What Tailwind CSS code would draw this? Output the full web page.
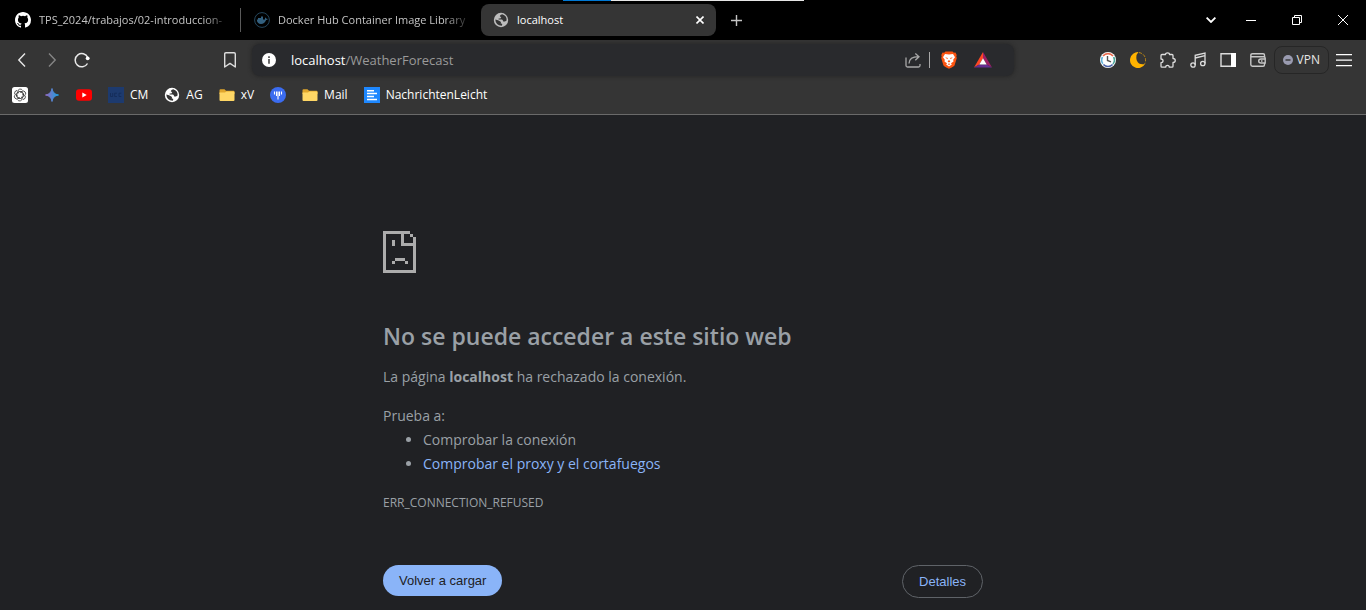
<!DOCTYPE html>
<html lang="es">
<head>
<meta charset="utf-8">
<meta name="viewport" content="width=device-width, initial-scale=1">
<title>localhost</title>
<script src="https://cdn.jsdelivr.net/npm/@tailwindcss/browser@4"></script>
</head>
<body class="min-h-screen overflow-hidden bg-[#202124] font-['Open_Sans',sans-serif] text-[#9aa0a6]">
<svg class="hidden" aria-hidden="true">
  <symbol id="globe" viewBox="0 0 16 16">
    <circle cx="8" cy="8" r="7.200" fill="currentColor"/>
    <path d="M9.200 2.300Q7 3 6.800 4.300L8.200 5.200 7.400 6.500H5.600V7.600H9Q10 8.200 10.200 9.400H12L13.600 8.600Q14 3.800 9.200 2.300ZM2.300 7.500 5 8.300 7.400 9.400Q8.600 10.200 7.600 11.300L9.300 12 8.800 13.700Q2.600 13.400 2.300 7.500Z" fill="#353535"/>
  </symbol>
  <symbol id="folder" viewBox="0 0 16 16">
    <path d="M.5 3.200Q.5 2.200 1.500 2.200H5.500L7 3.800H14.500Q15.500 3.800 15.500 4.800V7H.5Z" fill="#e0a62c"/>
    <path d="M.5 5.500H6L7.400 4.400H14.500Q15.500 4.400 15.500 5.400V13Q15.500 14 14.500 14H1.500Q.5 14 .5 13Z" fill="#ffd765"/>
  </symbol>
</svg>

<header class="relative">
  <div class="absolute left-[563px] top-0 flex h-px w-[241px] bg-[#e6e6e6]"><span class="h-px w-12 bg-[#0078d4]"></span></div>

  <nav class="flex h-10 items-center bg-black text-[11px]" aria-label="Pestañas">
    <a href="#" class="flex h-6 w-[241px] shrink-0 items-center gap-2 border-r border-[#5a5a5a] pl-[15px] pr-2 text-[#c4c4c4]">
      <svg class="size-4 shrink-0" viewBox="0 0 16 16" fill="#fff"><path d="M8 0C3.580 0 0 3.580 0 8c0 3.540 2.290 6.530 5.470 7.590.4.070.55-.17.55-.38v-1.490c-2.010.37-2.530-.49-2.690-.94-.09-.23-.48-.94-.82-1.130-.28-.15-.68-.52-.01-.53.63-.01 1.080.58 1.230.82.72 1.210 1.870.87 2.330.66.07-.52.28-.87.51-1.070-1.780-.2-3.640-.89-3.640-3.950 0-.87.31-1.590.82-2.150-.08-.2-.36-1.020.08-2.120 0 0 .67-.21 2.200.82a7.700 7.700 0 0 1 4 0c1.530-1.040 2.200-.82 2.200-.82.44 1.100.16 1.920.08 2.120.51.56.82 1.270.82 2.150 0 3.070-1.870 3.750-3.650 3.950.29.25.54.73.54 1.480v2.200c0 .21.15.46.55.38A8 8 0 0 0 16 8c0-4.420-3.580-8-8-8Z"/></svg>
      <span class="min-w-0 flex-1 overflow-hidden whitespace-nowrap mask-r-from-85%">TPS_2024/trabajos/02-introduccion-</span>
    </a>
    <a href="#" class="flex h-6 w-60 shrink-0 items-center gap-2 pl-[13px] pr-2 text-[#c4c4c4]">
      <svg class="size-4 shrink-0" viewBox="0 0 16 16"><circle cx="8" cy="8" r="7.400" fill="none" stroke="#24465c"/><path d="M2.800 7.600H11q-.3-1.300.3-2.200 1 .5 1 1.400 1-.2 1.600.2-.6 1-1.800 1.100Q10.500 12 7 12 3 12 2.800 7.600ZM4 6h3V4.600h2V7.600H4Z" fill="#33607f"/></svg>
      <span class="min-w-0 flex-1 overflow-hidden whitespace-nowrap mask-r-from-85%">Docker Hub Container Image Library</span>
    </a>
    <div class="flex h-8 w-[235px] shrink-0 items-center rounded-lg bg-[#353535] pl-3 pr-2.5 text-white">
      <svg class="size-4 text-[#bdbdbd]"><use href="#globe"/></svg>
      <span class="ml-2 flex-1">localhost</span>
      <button aria-label="Cerrar pestaña" class="p-0.5"><svg class="size-2" viewBox="0 0 8 8" fill="none" stroke="#fff" stroke-width="1.600"><path d="M.5.5l7 7M7.500.5l-7 7"/></svg></button>
    </div>
    <button aria-label="Nueva pestaña" class="ml-[15px]"><svg class="size-[11px]" viewBox="0 0 11 11" stroke="#c4c4c4" stroke-width="1.400"><path d="M5.500 0v11M0 5.500h11"/></svg></button>
    <div class="ml-auto flex items-center pr-[18px]">
      <button aria-label="Buscar pestañas" class="mr-[30px]"><svg class="h-1.5 w-2.5" viewBox="0 0 10 6" fill="none" stroke="#fff" stroke-width="1.800"><path d="M.6.6 5 5 9.400.6"/></svg></button>
      <button aria-label="Minimizar" class="mr-9"><svg class="size-2.5" viewBox="0 0 10 10" fill="#fff"><path d="M0 5h10v1H0z"/></svg></button>
      <button aria-label="Restaurar" class="mr-9"><svg class="size-2.5" viewBox="0 0 10 10" fill="none" stroke="#fff"><path d="M.5 2.500h7v7h-7ZM2.500 2V.5h7v7H8"/></svg></button>
      <button aria-label="Cerrar"><svg class="size-2.5" viewBox="0 0 10 10" stroke="#fff"><path d="M0 0l10 10M10 0 0 10"/></svg></button>
    </div>
  </nav>

  <div class="flex h-10 items-center bg-[#353535] px-3.5">
    <button aria-label="Atrás"><svg class="size-4" viewBox="0 0 16 16" fill="none" stroke="#e8e8e8" stroke-width="1.400"><path d="M11 1.500 4.800 8l6.200 6.500"/></svg></button>
    <button aria-label="Adelante" class="ml-3.5"><svg class="size-4" viewBox="0 0 16 16" fill="none" stroke="#858585" stroke-width="1.400"><path d="M5 1.500 11.200 8 5 14.500"/></svg></button>
    <button aria-label="Recargar" class="ml-3.5"><svg class="size-4" viewBox="0 0 16 16" fill="none" stroke="#e8e8e8" stroke-width="1.500"><path d="M13.500 11.500A6.600 6.600 0 1 1 13.800 5.500"/><circle cx="13.700" cy="6.300" r="1.900" fill="#fff" stroke="none"/></svg></button>
    <button aria-label="Añadir a marcadores" class="ml-[132px]"><svg class="size-4" viewBox="0 0 16 16" fill="none" stroke="#dcdcdc" stroke-width="1.400" stroke-linejoin="round"><path d="M2.700 2q0-1.200 1.200-1.200h8.200q1.200 0 1.200 1.200v13L8 11.400 2.700 15Z"/></svg></button>
    <div class="ml-3.5 flex h-8 flex-1 items-center rounded-lg bg-[#292a2d] pl-[9px] pr-[22px] shadow-[0_0_4px_#222]">
      <svg class="size-4" viewBox="0 0 16 16"><circle cx="8" cy="8" r="7" fill="#fff"/><path d="M7.200 4.300h1.600v1.600H7.200ZM7.200 7h1.600v4.700H7.200Z" fill="#444"/></svg>
      <a href="#" class="ml-3.5 flex-1 pt-px text-[13px] text-[#9a9a9a]"><span class="text-white">localhost</span>/WeatherForecast</a>
      <button aria-label="Compartir"><svg class="size-4" viewBox="0 0 16 16" fill="none" stroke="#a8a8a8" stroke-width="1.300"><path d="M1 5.500v8q0 1.500 1.500 1.500h11q1.500 0 1.500-1.500V12M4 11.500q.3-6.800 9.500-6.800M10.300 1.400l3.700 3.300-3.700 3.500"/></svg></button>
      <span class="ml-2 h-4 w-px bg-[#a8a8a8]"></span>
      <button aria-label="Brave Shields" class="ml-[11px]"><svg class="h-[18px] w-4" viewBox="0 0 16 18"><path d="M4.500.5h7l1.300 1.300 1.700-.2L15.700 4l-.4 1.500.5 1.500-2.200 7.200q-.5 1.300-5.600 3.500-5.100-2.200-5.600-3.500L.2 7l.5-1.500L.3 4l1.200-2.400 1.700.2Z" fill="#fb5411"/><path d="M4 3 8 3.600 12 3l2 3.200-1.800 2.600.3 1.700-2.500 1.800.8 1.300L8 15.600 5.200 13.600l.8-1.300-2.500-1.800.3-1.700L2 6.200Z" fill="#fff"/><path d="M4.200 6.300 6.800 6.900 6.400 8.300ZM11.800 6.300 9.200 6.900l.4 1.400ZM7.600 9.300h.8l1 1.300L8 11.500 6.600 10.600ZM6.700 13 8 12.400l1.300.6L8 13.900Z" fill="#fb5411"/></svg></button>
      <button aria-label="Brave Rewards" class="ml-[17px]"><svg class="h-4 w-[18px]" viewBox="0 0 18 16"><path d="M9 0 0 15.500 5.300 12.600 9 6.200Z" fill="#ff4724"/><path d="M9 0l9 15.500-5.300-2.900L9 6.200Z" fill="#9e1f63"/><path d="M0 15.500h18l-5.300-2.900H5.300Z" fill="#662d91"/><path d="M9 6.200 12.700 12.600H5.300Z" fill="#fff"/></svg></button>
    </div>
    <div class="ml-[86px] flex items-center gap-3.5">
      <button aria-label="Historial"><svg class="size-4" viewBox="0 0 16 16" fill="none"><circle cx="8" cy="8" r="8" fill="#fff"/><path d="M3 4A6.400 6.400 0 0 1 13 4" stroke="#e8694c" stroke-width="1.600"/><path d="M13.600 5A6.400 6.400 0 0 1 13 12" stroke="#4ba79b" stroke-width="1.600"/><path d="M12.600 12.500A6.400 6.400 0 0 1 3.400 12.500" stroke="#4961a8" stroke-width="1.600"/><path d="M2.800 11.700A6.400 6.400 0 0 1 2.500 5" stroke="#63b4dd" stroke-width="1.600"/><path d="M7.500 4v4.500l3.500 1.300" stroke="#555" stroke-width="1.400"/></svg></button>
      <button aria-label="Modo oscuro"><svg class="size-4" viewBox="0 0 16 16"><path d="M8.500.1A8 8 0 1 0 15 12Q9 13.500 6.800 8.500 5.300 3.500 8.500.1Z" fill="#ffb300"/><path d="M9 .6A7.500 7.500 0 0 1 14.500 12" fill="none" stroke="#c38b12" stroke-dasharray="3 1.500"/></svg></button>
      <button aria-label="Extensiones"><svg class="size-4" viewBox="0 0 16 16" fill="none" stroke="#ddd" stroke-width="1.300" stroke-linejoin="round"><path d="M1 3.500q0-1 1-1h3.500C5.500.2 9.500.2 9.500 2.500H12q1 0 1 1v3c3 0 3 4 0 4v3.700q0 1-1 1H9.300c0-2.500-3.600-2.500-3.600 0H2q-1 0-1-1v-3.500c2.700 0 2.700-3.700 0-3.700Z"/></svg></button>
      <button aria-label="Música"><svg class="size-4" viewBox="0 0 16 16" fill="none" stroke="#ddd" stroke-width="1.300"><circle cx="3" cy="13" r="2.200"/><circle cx="12.800" cy="11.500" r="2.200"/><path d="M5.200 13V3.300L15 1v10.500M5.200 6 15 3.700"/></svg></button>
      <button aria-label="Barra lateral"><svg class="size-4" viewBox="0 0 16 16"><path d="M1 1.700h14v12.600H1Z" fill="none" stroke="#ddd" stroke-width="1.400"/><path d="M11 1h5v14h-5z" fill="#fff"/></svg></button>
      <button aria-label="Cartera"><svg class="size-4" viewBox="0 0 16 16" fill="none" stroke="#c8c8c8" stroke-width="1.400"><path d="M14.500 5V3q0-1.300-1.300-1.300H2.500Q.8 1.700.8 3.200V12.500q0 1.700 1.700 1.700H13q1.500 0 1.500-1.500V11M.8 3.200q0 1.600 1.700 1.600h11.300q1.400 0 1.400 1.400v4.800H11q-2.300 0-2.300-2t2.300-2h4M11 9h1.500"/></svg></button>
    </div>
    <button class="ml-2 flex h-7 items-center gap-1 rounded-lg border border-[#262626] px-2 text-xs text-[#e6e6e6]"><svg class="size-2.5" viewBox="0 0 10 10"><circle cx="5" cy="5" r="5" fill="#9a9bb0"/><path d="M2.500 4.300h5v1.400h-5z" fill="#353535"/></svg>VPN</button>
    <button aria-label="Menú" class="ml-[7px]"><svg class="size-4" viewBox="0 0 16 16" fill="#fff"><path d="M0 2h16v1.300H0zM0 7.500h16v1.300H0zM0 13h16v1.300H0z"/></svg></button>
  </div>

  <nav class="flex h-[35px] items-center border-b border-[#6a6a6a] bg-[#353535] pb-1 pl-3 text-xs text-white" aria-label="Marcadores">
    <a href="#" aria-label="ChatGPT"><svg class="size-4" viewBox="0 0 16 16"><rect width="16" height="16" rx="2.500" fill="#fff"/><g fill="none" stroke="#333" stroke-width=".8"><path id="k" d="M5.800 6.800V4.400A2.500 2.500 0 0 1 10.400 3.200M5.800 5.500 8 4.200 10 5.400"/><use href="#k" transform="rotate(60 8 8)"/><use href="#k" transform="rotate(120 8 8)"/><use href="#k" transform="rotate(180 8 8)"/><use href="#k" transform="rotate(240 8 8)"/><use href="#k" transform="rotate(300 8 8)"/></g></svg></a>
    <a href="#" aria-label="Gemini" class="ml-4"><svg class="size-4" viewBox="0 0 16 16"><defs><linearGradient id="gem"><stop stop-color="#9168c0"/><stop offset=".5" stop-color="#5684d1"/><stop offset="1" stop-color="#1ba1e3"/></linearGradient></defs><path d="M8 1.500Q8.800 7.200 14.500 8 8.800 8.800 8 14.500 7.200 8.800 1.500 8 7.200 7.200 8 1.500Z" fill="url(#gem)" stroke="url(#gem)"/></svg></a>
    <a href="#" aria-label="YouTube" class="ml-4"><svg class="size-4" viewBox="0 0 16 16"><rect y="2.300" width="16" height="11.400" rx="3" fill="#f00"/><path d="M6.300 5.500v5L10.700 8Z" fill="#fff"/></svg></a>
    <a href="#" class="ml-4 flex items-center gap-1.5"><svg class="size-4" viewBox="0 0 16 16"><path d="M0 0h16v16H0z" fill="#1d3a6e"/><path d="M2.500 6v3.500h2.200V6M9 6.200H6.700v3.300H9M13.300 6.200H11v3.300h2.300" fill="none" stroke="#152d5a"/></svg>CM</a>
    <a href="#" class="ml-4 flex items-center gap-1.5"><svg class="size-4"><use href="#globe"/></svg>AG</a>
    <a href="#" class="ml-4 flex items-center gap-1.5"><svg class="size-4"><use href="#folder"/></svg>xV</a>
    <a href="#" aria-label="Marcador" class="ml-4"><svg class="size-4" viewBox="0 0 16 16"><circle cx="8" cy="8" r="8" fill="#3b6cf0"/><path d="M4.500 4.500v3M6.500 4.500v4.500M8 4.500v8M9.500 4.500v4.500M11.500 4.500v3" stroke="#fff" stroke-width="1.100"/></svg></a>
    <a href="#" class="ml-4 flex items-center gap-1.5"><svg class="size-4"><use href="#folder"/></svg>Mail</a>
    <a href="#" class="ml-4 flex items-center gap-1.5"><svg class="size-4" viewBox="0 0 16 16"><path d="M0 0h16v16H0z" fill="#1e88ff"/><path d="M3 3.700h7M3 6.600h10M3 9.500h7M3 12.400h10" stroke="#fff" stroke-width="1.500"/></svg>NachrichtenLeicht</a>
  </nav>
</header>

<main class="mx-auto max-w-[600px] pt-[116px] text-sm leading-6">
  <svg class="h-[42px] w-[33px]" viewBox="0 0 33 42" fill="#acacac" shape-rendering="crispEdges" role="img" aria-label="Error"><path d="M0 0h27v3h-6v9h12v30H0ZM3 3v36h27V15H18V3ZM27 3h3v3h-3ZM30 6h3v6h-3ZM9 9h3v6H9ZM12 27h10v3H12ZM9 30h3v3H9ZM22 30h3v3h-3Z" fill-rule="evenodd"/></svg>
  <h1 class="mt-12 text-[23px] leading-[30px] font-semibold">No se puede acceder a este sitio web</h1>
  <p class="mt-3.5">La página <strong>localhost</strong> ha rechazado la conexión.</p>
  <p class="mt-[15px]">Prueba a:</p>
  <ul class="list-disc pl-10">
    <li>Comprobar la conexión</li>
    <li><a href="#" class="text-[#8ab4f8]">Comprobar el proxy y el cortafuegos</a></li>
  </ul>
  <p class="mt-[15px] text-xs leading-6">ERR_CONNECTION_REFUSED</p>
  <div class="mt-[50px] flex items-start justify-between font-['Liberation_Sans',sans-serif] text-[13px] leading-[15px]">
    <button class="rounded-full bg-[#8ab4f8] px-4 py-2 text-[#202124]">Volver a cargar</button>
    <button class="rounded-full border border-[#5f6368] px-4 py-2 text-[#8ab4f8]">Detalles</button>
  </div>
</main>
</body>
</html>
